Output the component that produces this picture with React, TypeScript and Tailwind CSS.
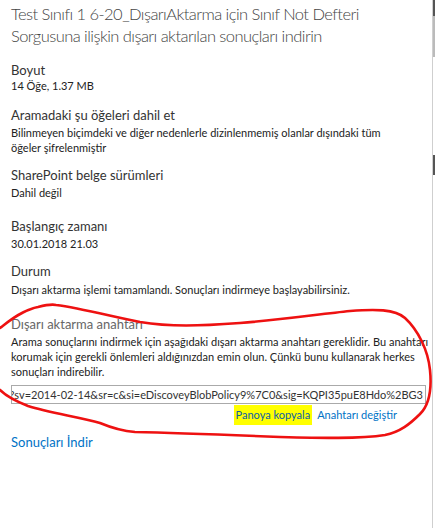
import React from 'react';

interface DetailRow {
  label: string;
  lines: string[];
  wrap: string; // spacing for the block
  valueGap: string;
}

const details: DetailRow[] = [
  { label: 'Boyut', lines: ['14 Öğe, 1.37 MB'], wrap: 'mt-[13px]', valueGap: 'mt-[-2px]' },
  {
    label: 'Aramadaki şu öğeleri dahil et',
    lines: [
      'Bilinmeyen biçimdeki ve diğer nedenlerle dizinlenmemiş olanlar dışındaki tüm',
      'öğeler şifrelenmiştir',
    ],
    wrap: 'mt-[12px]',
    valueGap: 'mt-0',
  },
  { label: 'SharePoint belge sürümleri', lines: ['Dahil değil'], wrap: 'mt-[10px]', valueGap: 'mt-0' },
  { label: 'Başlangıç zamanı', lines: ['30.01.2018 21.03'], wrap: 'mt-[16px]', valueGap: 'mt-0' },
  {
    label: 'Durum',
    lines: ['Dışarı aktarma işlemi tamamlandı. Sonuçları indirmeye başlayabilirsiniz.'],
    wrap: 'mt-[10px]',
    valueGap: 'mt-[1px]',
  },
];

const exportKey =
  '?sv=2014-02-14&sr=c&si=eDiscoveyBlobPolicy9%7C0&sig=KQPI35puE8Hdo%2BG3';

// freehand pen mark circled around the key section
const Scribble: React.FC = () => (
  <svg
    className="absolute left-0 top-0 pointer-events-none"
    width="435"
    height="528"
    viewBox="0 0 435 528"
  >
    <path
      d="M0 328 C8 322 22 310 38 307 C46 305 52 304 56 305 C80 308 110 316 140 322 C170 327 200 326 240 323 C280 320 320 314 350 311 C375 309 395 309 405 318 C418 330 428 350 430 370 C432 390 429 405 420 414 C410 424 400 432 385 435 C360 439 320 438 280 437 C230 435 180 433 135 432 C122 431 112 428 100 423 C80 417 50 413 28 406 C15 401 6 396 0 390"
      fill="none"
      stroke="#ee1111"
      strokeWidth="2.6"
      strokeLinecap="round"
      strokeLinejoin="round"
    />
  </svg>
);

export default function App() {
  return (
    <div
      className="relative w-[435px] h-[528px] overflow-hidden bg-white text-[#333]"
      style={{ fontFamily: 'Lato, "Open Sans", sans-serif' }}
    >
      <div className="flex h-full">
        <div className="min-w-0 flex-1 pl-[11px] pr-[6px] pt-[3px]">
          <h1 className="whitespace-nowrap text-[16.5px] leading-[22px] font-light tracking-[-0.55px] text-[#444]">
            Test Sınıfı 1 6-20_DışarıAktarma için Sınıf Not Defteri
            <br />
            Sorgusuna ilişkin dışarı aktarılan sonuçları indirin
          </h1>

          {details.map((d) => (
            <div key={d.label} className={d.wrap}>
              <div className="text-[13px] leading-[20px] text-[#333]">{d.label}</div>
              <div className={`${d.valueGap} text-[11px] leading-[15px] text-[#222]`}>
                {d.lines.map((l) => (
                  <div key={l} className="whitespace-nowrap">{l}</div>
                ))}
              </div>
            </div>
          ))}

          <div className="mt-[17px]">
            <div className="text-[13px] leading-[20px] text-[#666]">Dışarı aktarma anahtarı</div>
            <div className="text-[11px] leading-[15px] text-[#222]">
              <div className="whitespace-nowrap">
                Arama sonuçlarını indirmek için aşağıdaki dışarı aktarma anahtarı gereklidir. Bu anahtarı
              </div>
              <div className="whitespace-nowrap">
                korumak için gerekli önlemleri aldığınızdan emin olun. Çünkü bunu kullanarak herkes
              </div>
              <div className="whitespace-nowrap">sonuçları indirebilir.</div>
            </div>
            <div className="mt-[6px] flex h-[19px] justify-end overflow-hidden whitespace-nowrap border border-[#aaa] pr-[2px] text-[11px] leading-[17px] text-[#333]">
              {exportKey}
            </div>
            <div className="mt-[1px] flex justify-end gap-[5px] pr-[29px] text-[11px] leading-[20px]">
              <span className="bg-[#ffff00] px-[2px] text-[#0b5ea8]">Panoya kopyala</span>
              <span className="text-[#0072c6]">Anahtarı değiştir</span>
            </div>
          </div>

          <div className="mt-[7px] text-[13px] leading-[20px] text-[#0072c6]">Sonuçları İndir</div>
        </div>

        {/* window scrollbar strip */}
        <div className="flex w-[3px] shrink-0 flex-col border-l border-[#cfcfcf]">
          <div className="h-[16px] bg-[#555]" />
          <div className="h-[41px] bg-[#bbb]" />
          <div className="h-[98px]" />
          <div className="h-[20px] bg-[#555]" />
        </div>
      </div>
      <Scribble />
    </div>
  );
}
